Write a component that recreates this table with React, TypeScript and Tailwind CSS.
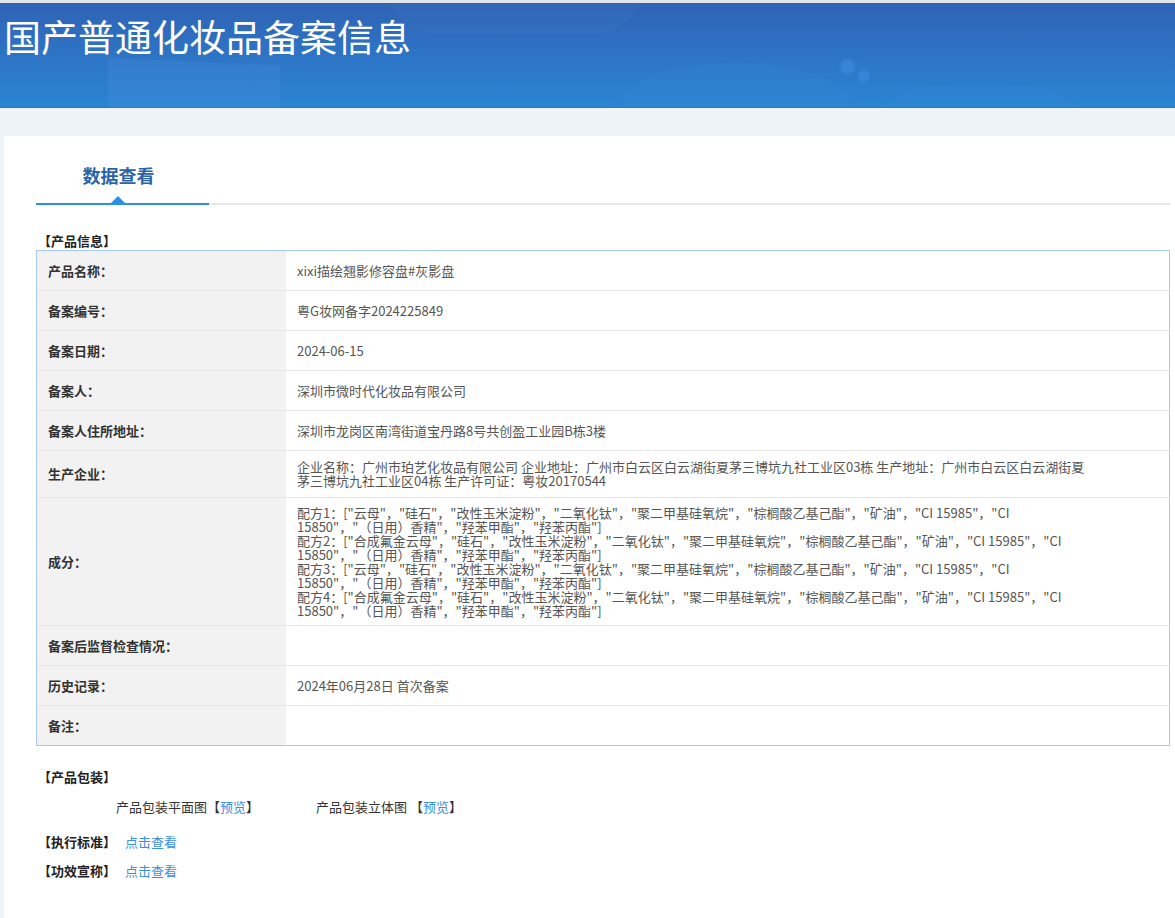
const font = { fontFamily: '"Microsoft YaHei", "Noto Sans CJK SC", "Noto Sans", sans-serif' };

type Row = { label: string; value?: React.ReactNode; pad?: string };

const formulaLines = [
  '配方1：["云母"，"硅石"，"改性玉米淀粉"，"二氧化钛"，"聚二甲基硅氧烷"，"棕榈酸乙基己酯"，"矿油"，"CI 15985"，"CI',
  '15850"，"（日用）香精"，"羟苯甲酯"，"羟苯丙酯"]',
  '配方2：["合成氟金云母"，"硅石"，"改性玉米淀粉"，"二氧化钛"，"聚二甲基硅氧烷"，"棕榈酸乙基己酯"，"矿油"，"CI 15985"，"CI',
  '15850"，"（日用）香精"，"羟苯甲酯"，"羟苯丙酯"]',
  '配方3：["云母"，"硅石"，"改性玉米淀粉"，"二氧化钛"，"聚二甲基硅氧烷"，"棕榈酸乙基己酯"，"矿油"，"CI 15985"，"CI',
  '15850"，"（日用）香精"，"羟苯甲酯"，"羟苯丙酯"]',
  '配方4：["合成氟金云母"，"硅石"，"改性玉米淀粉"，"二氧化钛"，"聚二甲基硅氧烷"，"棕榈酸乙基己酯"，"矿油"，"CI 15985"，"CI',
  '15850"，"（日用）香精"，"羟苯甲酯"，"羟苯丙酯"]',
];

const rows: Row[] = [
  { label: "产品名称：", value: "xixi描绘翘影修容盘#灰影盘" },
  { label: "备案编号：", value: "粤G妆网备字2024225849" },
  { label: "备案日期：", value: "2024-06-15" },
  { label: "备案人：", value: "深圳市微时代化妆品有限公司" },
  { label: "备案人住所地址：", value: "深圳市龙岗区南湾街道宝丹路8号共创盈工业园B栋3楼" },
  {
    label: "生产企业：",
    pad: "py-[9px]",
    value: (
      <>
        <div>企业名称：广州市珀艺化妆品有限公司 企业地址：广州市白云区白云湖街夏茅三博坑九社工业区03栋 生产地址：广州市白云区白云湖街夏</div>
        <div>茅三博坑九社工业区04栋 生产许可证：粤妆20170544</div>
      </>
    ),
  },
  {
    label: "成分：",
    pad: "py-[7.5px]",
    value: (
      <>
        {formulaLines.map((f, i) => (
          <div key={i} className="whitespace-nowrap">
            {f}
          </div>
        ))}
      </>
    ),
  },
  { label: "备案后监督检查情况：" },
  { label: "历史记录：", value: "2024年06月28日 首次备案" },
  { label: "备注：" },
];

export default function App() {
  return (
    <div className="min-h-screen bg-[#eef3f7] text-[13px] text-[#333]" style={font}>
      <div className="h-[3px] bg-[#e2e5e9]" />

      <div className="relative h-[105px] overflow-hidden border-b border-[#2a78c8] bg-gradient-to-b from-[#2f63b6] to-[#2a85d3]">
        <div className="absolute left-[108px] top-[55px] h-[60px] w-[172px] bg-[#4a8ee0]/25 [clip-path:polygon(0_0,100%_12%,100%_100%,0_100%)]" />
        <div className="absolute left-[385px] top-[-70px] h-[100px] w-[260px] rounded-full bg-white/[0.02]" />
        <div className="absolute left-[620px] top-[60px] h-[80px] w-[230px] rounded-[50%] bg-[#3a8fde]/15" />
        <div className="absolute left-[840px] top-[56px] h-[15px] w-[15px] rounded-full bg-[#3a8ee2]/60 blur-[1px]" />
        <div className="absolute left-[858px] top-[67px] h-[12px] w-[12px] rounded-full bg-[#3a8ee2]/60 blur-[1px]" />
        <div className="absolute left-[880px] top-[80px] h-[60px] w-[200px] rounded-[50%] bg-[#3a8fde]/10" />
        <h1 className="relative pl-[4px] pt-[9px] text-[37px] font-normal leading-[48px] text-white">
          国产普通化妆品备案信息
        </h1>
      </div>

      <div className="h-[28px]" />

      <div className="ml-[4px] min-h-[782px] bg-white pr-[5px]">
        <div className="ml-[32px] flex">
          <div className="relative flex h-[69px] w-[173px] items-center justify-center border-b-2 border-[#2e90e3] pt-[12px]">
            <span className="pr-[8px] text-[18px] font-bold text-[#2a63a8]">数据查看</span>
            <span className="absolute bottom-0 left-[75px] h-0 w-0 border-x-[7px] border-b-[7px] border-x-transparent border-b-[#2e90e3]" />
          </div>
          <div className="flex-1 border-b-2 border-[#e6e6e6]" />
        </div>

        <div className="ml-[34px] mt-[27px] font-bold leading-[18px] text-[#222]">【产品信息】</div>

        <div className="ml-[32px] border border-[#a8c8ef]">
          {rows.map((r, i) => (
            <div
              key={r.label}
              className={`grid grid-cols-[249px_1fr] ${i < rows.length - 1 ? "border-b border-[#e6e6e6]" : ""}`}
            >
              <div className="flex min-h-[39px] items-center bg-[#f2f2f2] px-[11px] font-bold text-[#333]">
                {r.label}
              </div>
              <div
                className={`flex items-center pl-[11px] pr-[20px] text-[#555] ${
                  r.pad ? `${r.pad} leading-[14px]` : "min-h-[39px]"
                }`}
              >
                <div>{r.value}</div>
              </div>
            </div>
          ))}
        </div>

        <div className="ml-[34px] mt-[22px] font-bold leading-[18px] text-[#222]">【产品包装】</div>
        <div className="mt-[12px] flex leading-[18px] text-[#333]">
          <span className="ml-[112px] w-[200px]">
            产品包装平面图【<span className="text-[#3a8ee0]">预览</span>】
          </span>
          <span>
            产品包装立体图 【<span className="text-[#3a8ee0]">预览</span>】
          </span>
        </div>
        <div className="ml-[34px] mt-[17px] leading-[18px]">
          <span className="font-bold text-[#222]">【执行标准】</span>
          <span className="ml-[9px] text-[#3a8ee0]">点击查看</span>
        </div>
        <div className="ml-[34px] mt-[11px] leading-[18px]">
          <span className="font-bold text-[#222]">【功效宣称】</span>
          <span className="ml-[9px] text-[#3a8ee0]">点击查看</span>
        </div>
      </div>
    </div>
  );
}
